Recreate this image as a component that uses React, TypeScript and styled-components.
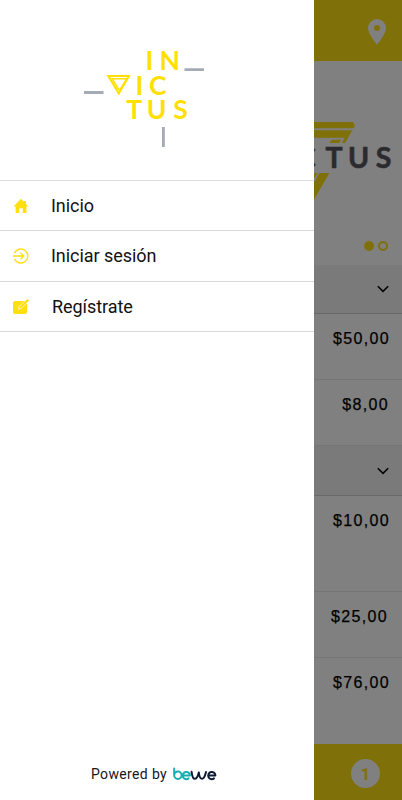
import React from "react";
import styled, { createGlobalStyle } from "styled-components";

const GlobalStyle = createGlobalStyle`
  *, *::before, *::after { box-sizing: border-box; }
  body { margin: 0; background: #fff; }
`;

const Screen = styled.div`
  display: flex;
  width: 402px;
  height: 800px;
  overflow: hidden;
  font-family: Roboto, "Liberation Sans", sans-serif;
`;

const Drawer = styled.aside`
  display: flex;
  flex-direction: column;
  flex: 0 0 314px;
  background: #fff;
`;

const Brand = styled.div`
  height: 180px;
  svg { display: block; }
`;

const LogoText = styled.text`
  font-family: Lato, sans-serif;
  font-weight: 700;
  font-size: 26.5px;
  fill: #ffe000;
`;

const Menu = styled.nav`
  display: flex;
  flex-direction: column;
  border-top: 1px solid #dedede;
`;

const MenuItem = styled.a<{ $indent: number }>`
  display: flex;
  align-items: center;
  height: 50.25px;
  padding-left: 13px;
  border-bottom: 1px solid #d9d9d9;
  color: #111;
  font-size: 18px;
  letter-spacing: -0.05px;
  svg { flex: 0 0 auto; margin-right: ${(p) => p.$indent}px; }
`;

const Powered = styled.footer`
  display: flex;
  align-items: center;
  margin-top: auto;
  height: 52px;
  padding-left: 91px;
  font-size: 14px;
  letter-spacing: 0.35px;
  color: #161616;
  svg { margin-left: 5px; }
`;

const Shaded = styled.main`
  display: flex;
  flex-direction: column;
  flex: 0 0 88px;
  background: #808080;
`;

const TopBar = styled.header`
  display: flex;
  height: 61px;
  padding: 19px 0 0 54px;
  background: #80700a;
`;

const Banner = styled.section`
  display: flex;
  flex-direction: column;
  height: 204px;
`;

const BannerText = styled.text`
  font-family: Lato, sans-serif;
  font-weight: 700;
  font-size: 28.5px;
  fill: #2b2b2f;
  stroke: #2b2b2f;
  stroke-width: 0.6px;
`;

const Dots = styled.div`
  display: flex;
  gap: 4px;
  padding: 4px 0 0 50px;
`;

const Dot = styled.span<{ $active?: boolean }>`
  width: 10px;
  height: 10px;
  border: 2px solid #80700a;
  border-radius: 50%;
  background: ${(p) => (p.$active ? "#80700a" : "transparent")};
`;

const Section = styled.div<{ $height: number }>`
  display: flex;
  align-items: center;
  justify-content: flex-end;
  height: ${(p) => p.$height}px;
  padding-right: 13px;
  background: #7a7a7a;
  border-bottom: 1px solid #696969;
`;

const PriceRow = styled.div<{ $height: number; $right?: number; $last?: boolean }>`
  display: flex;
  justify-content: flex-end;
  height: ${(p) => p.$height}px;
  padding: 15px ${(p) => p.$right ?? 12}px 0 0;
  border-bottom: ${(p) => (p.$last ? "none" : "1px solid #757575")};
  font: 16px/20px "Liberation Sans", Arial, sans-serif;
  letter-spacing: 1.35px;
  color: #000;
  -webkit-text-stroke: 0.25px #000;
`;

const BottomBar = styled.footer`
  display: flex;
  height: 56px;
  padding: 15px 0 0 37px;
  background: #80700a;
`;

const Count = styled.span`
  display: flex;
  align-items: center;
  justify-content: center;
  width: 29px;
  height: 29px;
  border-radius: 50%;
  background: #808080;
  color: #80700a;
  font-size: 17px;
  font-weight: 700;
`;

const InvictusLogo = () => (
  <svg width="314" height="180" viewBox="0 0 314 180">
    <LogoText x="145.5 159.4" y="70.2">IN</LogoText>
    <LogoText x="135.5 149" y="94.5">IC</LogoText>
    <LogoText x="126.2 146.7 173.2" y="119">TUS</LogoText>
    <path d="M108.3 76H129L118.8 93.6Z" fill="none" stroke="#ffe000" strokeWidth="2" />
    <path d="M111.3 78.8H126.6L119.6 90.5M112 78.5L119 90" fill="none" stroke="#ffe000" strokeWidth="1.5" />
    <path d="M84 92.5H103.5M184.5 69.6H204M163.4 127V147" fill="none" stroke="#a4abb5" strokeWidth="2.8" />
  </svg>
);

const HomeIcon = () => (
  <svg width="16" height="16" viewBox="0 0 16 16" fill="#ffdf10">
    <path d="M8 .8L.5 8.4H2.6V15H6.2V10.3H9.8V15H13.4V8.4H15.5L13 5.9V3H11.2V4Z" />
  </svg>
);

const LoginIcon = () => (
  <svg width="16" height="16" viewBox="0 0 16 16" fill="none" stroke="#ffdf10" strokeWidth="1.4">
    <path d="M1.4 5.3A7 7 0 1 1 1.4 10.7M0 8H10.5M7.5 4.8L10.7 8L7.5 11.2" />
  </svg>
);

const EditIcon = () => (
  <svg width="17" height="17" viewBox="0 0 17 17">
    <path d="M2 3H12L14 5V14Q14 16 12 16H2Q0 16 0 14V5Q0 3 2 3Z" fill="#ffdf10" />
    <path d="M5.4 11.2L6.1 8.5L14.5.6L16.4 2.4L8 10.4Z" fill="#ffdf10" stroke="#fff" strokeWidth=".7" />
  </svg>
);

const PinIcon = () => (
  <svg width="18" height="26" viewBox="0 0 18 26">
    <path fillRule="evenodd" fill="#808080" d="M9 0A9 9 0 0 0 0 9C0 15.2 9 25.5 9 25.5S18 15.2 18 9A9 9 0 0 0 9 0ZM9 6A3 3 0 1 1 9 12A3 3 0 1 1 9 6Z" />
  </svg>
);

const Chevron = () => (
  <svg width="12" height="8" viewBox="0 0 12 8" fill="none" stroke="#050505" strokeWidth="1.6">
    <path d="M.8 1.2L6 6.4L11.2 1.2" />
  </svg>
);

const BannerLogo = () => (
  <svg width="88" height="176" viewBox="0 0 88 176">
    <g fill="#80700a">
      <path d="M0 61H39L41 65L39.5 67.3H0ZM0 69.2H38.3L31 82H27.8L30.5 76.8H0ZM18 78.8H27L25.2 82H15ZM0 112H3.6L0 118ZM5.4 112H15.5L0 138.5V121.3Z" />
    </g>
    <BannerText x="-17.3 11.6 34 61.8" y="107.4">CTUS</BannerText>
  </svg>
);

const BeweLogo = () => (
  <svg width="46" height="16" viewBox="0 0 46 16" fill="none" strokeWidth="2" strokeLinecap="round" strokeLinejoin="round">
    <path stroke="#17aeb1" d="M2.2 2.4V9.2M2.2 9.2A3.7 3.7 0 1 0 5.9 5.5A3.7 3.7 0 0 0 2.2 9.2M12.2 9.6H18A3.6 3.6 0 1 0 16.6 12.4" />
    <path stroke="#101b35" d="M19.6 5.8Q20.4 12.8 22.8 12.8T26.8 6.4Q27.6 12.8 30 12.8T34 6M37.2 9.6H43.4A3.6 3.6 0 1 0 42 12.4" />
  </svg>
);

export default function App() {
  return (
    <>
      <GlobalStyle />
      <Screen>
        <Drawer>
          <Brand><InvictusLogo /></Brand>
          <Menu>
            <MenuItem $indent={22}><HomeIcon />Inicio</MenuItem>
            <MenuItem $indent={22}><LoginIcon />Iniciar sesión</MenuItem>
            <MenuItem $indent={22}><EditIcon />Regístrate</MenuItem>
          </Menu>
          <Powered>Powered by <BeweLogo /></Powered>
        </Drawer>
        <Shaded>
          <TopBar><PinIcon /></TopBar>
          <Banner>
            <BannerLogo />
            <Dots><Dot $active /><Dot /></Dots>
          </Banner>
          <Section $height={49}><Chevron /></Section>
          <PriceRow $height={66}>$50,00</PriceRow>
          <PriceRow $height={66} $right={13}>$8,00</PriceRow>
          <Section $height={50}><Chevron /></Section>
          <PriceRow $height={96}>$10,00</PriceRow>
          <PriceRow $height={66} $right={14}>$25,00</PriceRow>
          <PriceRow $height={86} $last>$76,00</PriceRow>
          <BottomBar><Count>1</Count></BottomBar>
        </Shaded>
      </Screen>
    </>
  );
}
